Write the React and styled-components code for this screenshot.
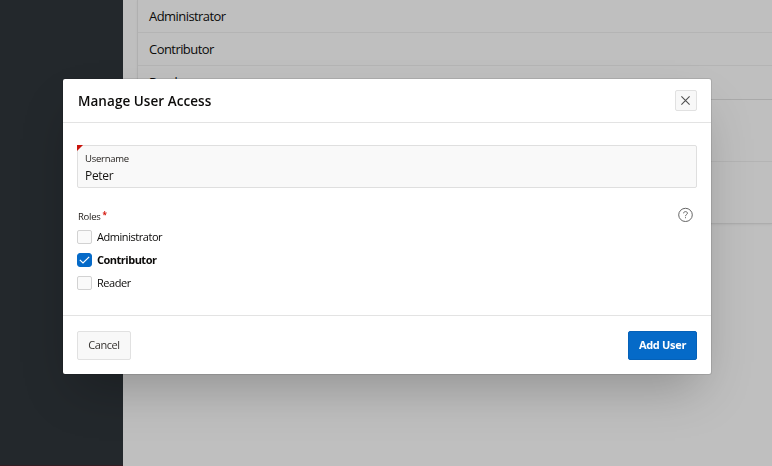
import React from "react";
import styled, { createGlobalStyle } from "styled-components";

const GlobalStyle = createGlobalStyle`
  * { box-sizing: border-box; }
  body { margin: 0; overflow: hidden; font-family: "Open Sans", "Noto Sans", sans-serif; color: #0c0b0a; }
  button, input { font-family: inherit; }
`;

const Page = styled.div`
  display: grid;
  grid-template-columns: 123px 1fr;
  height: 466px;
  overflow: hidden;
  background: #bfbfbf;
`;

const Sidebar = styled.aside`
  background: #23282c;
  border-bottom: 1px solid #351d23;
`;

const Content = styled.main`
  padding-left: 14px;
`;

const Table = styled.div`
  height: 224px;
  border-left: 1px solid #b0b0b0;
  border-bottom: 1px solid #adadad;
  box-shadow: 0 1px 2px rgba(0, 0, 0, 0.06);
`;

const Row = styled.div`
  height: ${(p) => p.$height}px;
  padding: ${(p) => p.$top}px 0 0 11px;
  border-bottom: 1px solid ${(p) => (p.$strong ? "#a9a9a9" : "#b4b4b4")};
  font-size: 13px;
  line-height: 18px;
  letter-spacing: -0.56px;
`;

const Overlay = styled.div`
  position: fixed;
  inset: 0;
  padding: 79px 61px 0 63px;
`;

const Dialog = styled.section`
  display: flex;
  flex-direction: column;
  height: 295px;
  background: #fff;
  border-radius: 2px;
  box-shadow: 0 0 0 1px rgba(0, 0, 0, 0.1), 0 24px 48px -12px rgba(0, 0, 0, 0.25);
`;

const Header = styled.header`
  display: flex;
  align-items: center;
  justify-content: space-between;
  height: 44px;
  padding: 0 14px 0 15px;
  border-bottom: 1px solid #e3e3e3;
`;

const Title = styled.h1`
  margin: 0;
  font-size: 13.5px;
  font-weight: 600;
  line-height: 20px;
  letter-spacing: 0.05px;
`;

const CloseButton = styled.button`
  display: grid;
  place-items: center;
  width: 22px;
  height: 21px;
  padding: 0 1px 0 0;
  border: 1px solid #e1e1e1;
  border-radius: 2px;
  background: #f8f8f8;
  color: #505050;
`;

const Body = styled.div`
  flex: 1;
  padding: 22px 14px 0;
`;

const Field = styled.label`
  position: relative;
  display: block;
  height: 43px;
  padding: 6px 7px 0;
  border: 1px solid #dfdfdf;
  border-radius: 2px;
  background: #f9f9f9;

  &::before {
    content: "";
    position: absolute;
    top: -1px;
    left: -1px;
    width: 6px;
    height: 6px;
    background: #c9130b;
    clip-path: polygon(0 0, 100% 0, 0 100%);
  }
`;

const FieldLabel = styled.span`
  display: block;
  font-size: 9.5px;
  line-height: 14px;
  letter-spacing: -0.25px;
  color: #24211e;
`;

const Input = styled.input`
  display: block;
  width: 100%;
  height: 18px;
  margin-top: 1px;
  padding: 0;
  border: 0;
  outline: 0;
  background: transparent;
  color: #161412;
  font-size: 12px;
  line-height: 18px;
  letter-spacing: -0.3px;
`;

const GroupHeader = styled.div`
  display: flex;
  justify-content: space-between;
  height: 37px;
  padding: 19px 4px 0 1px;
`;

const GroupLabel = styled.span`
  display: flex;
  padding-top: 2px;
  font-size: 9.5px;
  line-height: 15px;
  letter-spacing: -0.25px;
  color: #24211e;
`;

const Required = styled.span`
  margin: -2px 0 0 2px;
  color: #d51c12;
  font-size: 8px;
  font-weight: 700;
`;

const HelpIcon = styled.svg`
  width: 15px;
  height: 15px;
  fill: none;
  stroke: #656565;
`;

const Option = styled.label`
  display: flex;
  align-items: center;
  gap: 5px;
  height: 23px;
  font-size: 11px;
  font-weight: ${(p) => (p.$checked ? 700 : 400)};
  letter-spacing: ${(p) => (p.$checked ? -0.5 : -0.45)}px;
`;

const Box = styled.span`
  display: grid;
  place-items: center;
  width: 15px;
  height: 14px;
  border: 1px solid ${(p) => (p.$checked ? "#056ac8" : "#d2d2d2")};
  border-radius: ${(p) => (p.$checked ? 3 : 2)}px;
  background: ${(p) => (p.$checked ? "#056ac8" : "#fafafa")};
`;

const Footer = styled.footer`
  display: flex;
  justify-content: space-between;
  height: 59px;
  padding: 15px 14px 0;
  border-top: 1px solid #e3e3e3;
`;

const Button = styled.button`
  width: ${(p) => (p.$primary ? 69 : 54)}px;
  height: 29px;
  padding: 0 0 2px;
  border: 1px solid ${(p) => (p.$primary ? "#0561b8" : "#e1e1e1")};
  border-radius: 2px;
  background: ${(p) => (p.$primary ? "#056ac8" : "#f8f8f8")};
  color: ${(p) => (p.$primary ? "#fff" : "#35322f")};
  font-size: 11px;
  font-weight: ${(p) => (p.$primary ? 700 : 400)};
  letter-spacing: ${(p) => (p.$primary ? -0.3 : -0.45)}px;
`;

const roles = ["Administrator", "Contributor", "Reader"];

export default function App() {
  return (
    <>
      <GlobalStyle />
      <Page>
        <Sidebar />
        <Content>
          <Table>
            <Row $height={33} $top={7}>Administrator</Row>
            <Row $height={33} $top={7}>Contributor</Row>
            <Row $height={34} $top={7} $strong>Reader</Row>
            <Row $height={62} $top={0} />
          </Table>
        </Content>
      </Page>
      <Overlay>
        <Dialog role="dialog" aria-label="Manage User Access">
          <Header>
            <Title>Manage User Access</Title>
            <CloseButton aria-label="Close">
              <svg width="9" height="9" viewBox="0 0 9 9" fill="none" stroke="currentColor" strokeWidth="1.1">
                <path d="M.4.4 8.6 8.6M8.6.4.4 8.6" />
              </svg>
            </CloseButton>
          </Header>
          <Body>
            <Field>
              <FieldLabel>Username</FieldLabel>
              <Input defaultValue="Peter" />
            </Field>
            <GroupHeader>
              <GroupLabel>Roles<Required>*</Required></GroupLabel>
              <HelpIcon viewBox="0 0 15 15">
                <ellipse cx="7.5" cy="7.9" rx="6.8" ry="6.6" />
                <path d="M5.6 6.3C5.6 5.2 6.4 4.6 7.5 4.6S9.4 5.2 9.4 6.3C9.4 7.5 7.5 7.5 7.5 9.2M7.5 10.2v1" />
              </HelpIcon>
            </GroupHeader>
            {roles.map((role) => {
              const checked = role === "Contributor";
              return (
                <Option key={role} $checked={checked}>
                  <Box $checked={checked}>
                    {checked && (
                      <svg width="11" height="8" viewBox="0 0 11 8" fill="none" stroke="#fff" strokeWidth="1.2">
                        <path d="M.8 3.8 4 7 10.2.8" />
                      </svg>
                    )}
                  </Box>
                  {role}
                </Option>
              );
            })}
          </Body>
          <Footer>
            <Button>Cancel</Button>
            <Button $primary>Add User</Button>
          </Footer>
        </Dialog>
      </Overlay>
    </>
  );
}
